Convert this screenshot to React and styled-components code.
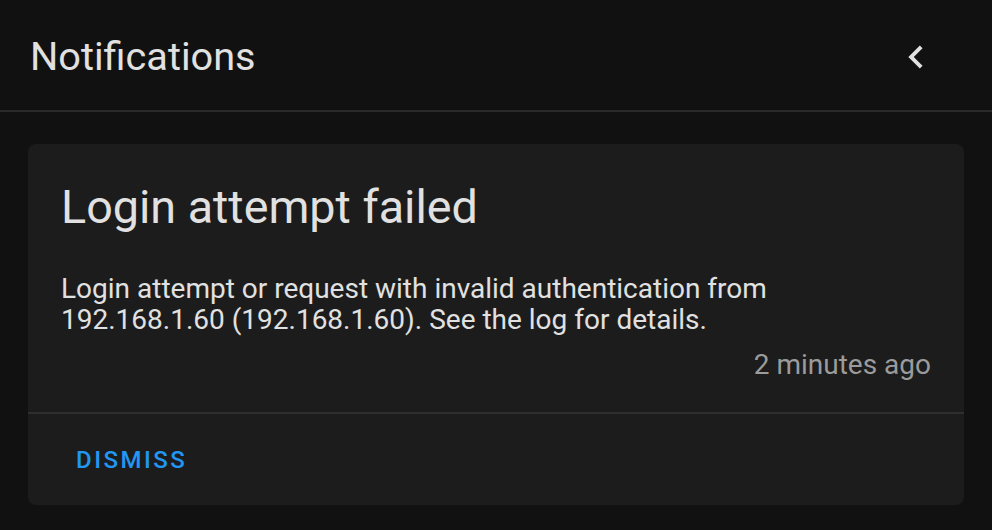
import React from "react";
import styled, { createGlobalStyle } from "styled-components";

const Global = createGlobalStyle`
  html, body { margin: 0; padding: 0; background: #111111; }
  body { font-family: Roboto, "Noto Sans", "Liberation Sans", sans-serif; color: #e1e1e1; }
`;

const Drawer = styled.div`
  width: 992px;
  height: 530px;
  background: #111111;
  display: flex;
  flex-direction: column;
  overflow: hidden;
`;

const Header = styled.header`
  flex: none;
  display: flex;
  align-items: center;
  justify-content: space-between;
  padding: 3px 53px 0 30px;
  box-sizing: border-box;
  border-bottom: 2px solid #2a2a2a;
  height: 112px;
`;

const Title = styled.h1`
  margin: 0;
  font-size: 39.7px;
  line-height: 48px;
  font-weight: 400;
  color: #e1e1e1;
`;

const IconButton = styled.button`
  background: none;
  border: 0;
  padding: 0;
  width: 46px;
  height: 46px;
  display: flex;
  align-items: center;
  justify-content: center;
  color: #e1e1e1;
  cursor: pointer;
`;

const Content = styled.div`
  padding: 32px 28px;
`;

const Card = styled.div`
  background: #1c1c1c;
  border-radius: 8px;
`;

const CardBody = styled.div`
  padding: 31px 33px 32px 33px;
`;

const CardTitle = styled.h2`
  margin: 0;
  font-size: 46.7px;
  line-height: 64px;
  font-weight: 400;
  color: #e1e1e1;
`;

const Message = styled.p`
  margin: 34px 0 0;
  font-size: 28px;
  line-height: 31px;
  color: #e1e1e1;
  max-width: 740px;
`;

const Time = styled.div`
  margin-top: 14px;
  text-align: right;
  font-size: 28px;
  line-height: 31px;
  color: #9b9b9b;
`;

const Actions = styled.div`
  border-top: 2px solid #2e2e2e;
  height: 91px;
  padding: 0 16px;
  display: flex;
  align-items: center;
`;

const TextButton = styled.button`
  background: none;
  border: 0;
  padding: 0 32px;
  height: 56px;
  font-family: inherit;
  font-size: 24px;
  font-weight: 500;
  letter-spacing: 2.5px;
  color: #2196f3;
  text-transform: uppercase;
  cursor: pointer;
`;

export default function App() {
  return (
    <>
      <Global />
      <Drawer>
        <Header>
          <Title>Notifications</Title>
          <IconButton aria-label="Close">
            <svg width="46" height="46" viewBox="0 0 24 24">
              <path fill="currentColor" d="M15.41,16.58L10.83,12L15.41,7.41L14,6L8,12L14,18L15.41,16.58Z" />
            </svg>
          </IconButton>
        </Header>
        <Content>
          <Card>
            <CardBody>
              <CardTitle>Login attempt failed</CardTitle>
              <Message>
                Login attempt or request with invalid authentication from 192.168.1.60 (192.168.1.60). See the log for details.
              </Message>
              <Time>2 minutes ago</Time>
            </CardBody>
            <Actions>
              <TextButton>Dismiss</TextButton>
            </Actions>
          </Card>
        </Content>
      </Drawer>
    </>
  );
}
